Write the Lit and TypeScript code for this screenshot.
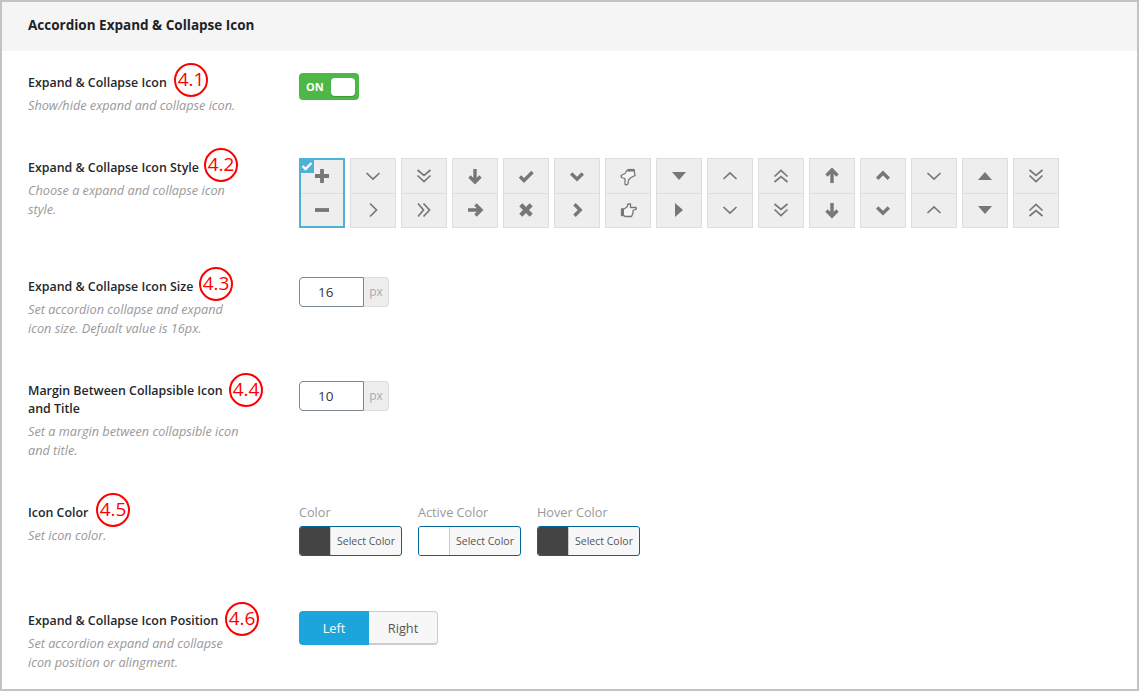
import { LitElement, html, css, svg } from "lit";
import { customElement } from "lit/decorators.js";

const line = (d: string, w: number) => svg`<path d=${d} fill="none" stroke="#777" stroke-width=${w} />`;
const fill = (d: string) => svg`<path d=${d} fill="#777" />`;

const ICONS: Record<string, unknown> = {
  plus: line("M10 3V17M3 10H17", 3.8),
  minus: line("M3 10H17", 3.8),
  chevD: line("M3.500 7 10 13 16.500 7", 1.7),
  chevU: line("M3.500 13 10 7 16.500 13", 1.7),
  chevR: line("M7 3.500 13.500 10 7 16.500", 1.7),
  dblD: line("M3.500 4 10 9.500 16.500 4M3.500 9.500 10 15.500 16.500 9.500", 1.7),
  dblU: line("M3.500 16 10 10.500 16.500 16M3.500 10.500 10 4.500 16.500 10.500", 1.7),
  dblR: line("M4 3.500 9.500 10 4 16.500M9.500 3.500 15.500 10 9.500 16.500", 1.7),
  arrD: line("M10 3V16M4.500 10.500 10 16 15.500 10.500", 3.400),
  arrU: line("M10 17V4M4.500 9.500 10 4 15.500 9.500", 3.400),
  arrR: line("M3 10H16M10.500 4.500 16 10 10.500 15.500", 3.400),
  check: line("M4 10.500 8 14.500 16.500 6", 3.400),
  x: line("M4.800 4.800 15.200 15.200M15.200 4.800 4.800 15.200", 4.400),
  boldD: line("M4.200 7.500 10 13.200 15.800 7.500", 3.400),
  boldU: line("M4.200 12.800 10 7 15.800 12.800", 3.400),
  boldR: line("M7.500 4.200 13.200 10 7.500 15.800", 3.400),
  handD: svg`<path d="M9 4.500 16 4 17 9.500 13 11.500 10.500 14 10 18 8 19 7 18V12.500L3.500 11.500 3 9.500 7 7.500Z" fill="#f5f5f5" stroke="#777" stroke-width="1.300" stroke-linejoin="round"/><path d="M9.500 4.200H16.500" stroke="#777" stroke-width="2.600"/>`,
  handR: svg`<path d="M3.500 9H6L9 7 10 3.800 12.500 4V7.500H18L18.500 9 15 10.500V13L13.500 16.500H7L6 15.500H3.500Z" fill="#f5f5f5" stroke="#777" stroke-width="1.300" stroke-linejoin="round"/><path d="M3 9H6V16H3Z" fill="#777"/>`,
  carD: fill("M3 6H17L10 14Z"),
  carU: fill("M3 14H17L10 6Z"),
  carR: fill("M6 3V17L14 10Z"),
};

const GRID: [string, string][] = [
  ["plus", "minus"], ["chevD", "chevR"], ["dblD", "dblR"], ["arrD", "arrR"], ["check", "x"],
  ["boldD", "boldR"], ["handD", "handR"], ["carD", "carR"], ["chevU", "chevD"], ["dblU", "dblD"],
  ["arrU", "arrD"], ["boldU", "boldD"], ["chevD", "chevU"], ["carU", "carD"], ["dblD", "dblU"],
];

const icon = (n: string) => html`<svg class="ic" viewBox="0 0 20 20" width="20" height="20">${ICONS[n]}</svg>`;

@customElement("app-root")
export class AppRoot extends LitElement {
  static styles = css`
    :host { display: block; font-family: "Open Sans", sans-serif; }
    .frame { box-sizing: border-box; width: 1139px; height: 691px; border: 2px solid #c3c3c3; background: #fff; overflow: hidden; position: relative; }
    .head { height: 49px; box-sizing: border-box; background: #f5f5f5; padding: 0 26px 4px; display: flex; align-items: center; font-size: 13.500px; font-weight: 700; color: #1d2327; }
    .body { padding: 22px 26px 0; }
    .row { display: flex; padding-bottom: 43px; }
    .left { width: 271px; flex: none; }
    .lbl { font-size: 12.400px; line-height: 18px; font-weight: 600; color: #23282d; width: 205px; padding-top: 1px; }
    .desc { font-size: 12.700px; line-height: 19px; font-style: italic; color: #999; margin-top: 4px; width: 216px; }
    .toggle { width: 60px; height: 27px; box-sizing: border-box; border-radius: 4px; background: #4db848; display: flex; align-items: center; justify-content: space-between; padding: 0 4px 0 7px; font-size: 11px; font-weight: 700; color: #fff; }
    .knob { width: 24px; height: 18px; border-radius: 4px; background: #fff; box-shadow: 0 1px 1px rgba(0,0,0,.2); }
    .grid { display: flex; gap: 5px; padding-bottom: 6px; }
    .tile { width: 46px; height: 70px; box-sizing: border-box; border: 1px solid #ddd; background: #eee; display: flex; flex-direction: column; position: relative; }
    .tile.sel { border: 2px solid #4fb0d8; }
    .half { flex: 1; display: flex; align-items: center; justify-content: center; }
    .half + .half { border-top: 1px solid #ddd; }
    .tick { position: absolute; left: -1px; top: -1px; width: 14px; height: 14px; background: #4fb0d8; }
    .tick svg { display: block; }
    .ic { display: block; }
    .num { display: flex; height: 30px; }
    .num .val { width: 65px; box-sizing: border-box; border: 1px solid #7e8993; border-radius: 4px 0 0 4px; padding-left: 18px; font-size: 13.500px; line-height: 28px; color: #32373c; background: #fff; }
    .num .unit { width: 25px; box-sizing: border-box; border: 1px solid #ddd; border-left: 0; border-radius: 0 4px 4px 0; background: #eee; color: #aaa; font-size: 12px; line-height: 28px; text-align: center; }
    .colors { display: flex; gap: 16px; padding-bottom: 12px; }
    .c-lbl { font-size: 12.700px; line-height: 18px; color: #999; margin-bottom: 5px; }
    .cbtn { display: flex; width: 103px; height: 30px; box-sizing: border-box; border: 1px solid #006799; border-radius: 3px; overflow: hidden; background: #f7f7f7; }
    .sw { width: 30px; border-right: 1px solid #ccc; }
    .sw.dark { background: #444; }
    .sw.light { background: #fff; }
    .cbtn span { flex: 1; text-align: center; font-size: 10.500px; line-height: 28px; color: #555; }
    .seg { display: flex; height: 34px; font-size: 12.800px; line-height: 35px; text-align: center; }
    .seg div { box-sizing: border-box; }
    .seg .on { width: 70px; background: #1ba5dc; color: #fff; border-radius: 4px 0 0 4px; font-weight: 500; }
    .seg .off { width: 69px; background: #f7f7f7; color: #555; border: 1px solid #ccc; border-left: 0; border-bottom-width: 2px; border-radius: 0 4px 4px 0; line-height: 33px; }
    .badge { position: absolute; width: 34px; height: 34px; box-sizing: border-box; border: 2.500px solid #f00; border-radius: 50%; color: #f00; font-size: 19px; line-height: 28px; text-align: center; }
  `;

  private row(label: string, desc: string, ctl: unknown) {
    return html`<div class="row">
      <div class="left"><div class="lbl">${label}</div><div class="desc">${desc}</div></div>
      <div>${ctl}</div>
    </div>`;
  }

  private color(label: string, tone: string) {
    return html`<div>
      <div class="c-lbl">${label}</div>
      <div class="cbtn"><div class="sw ${tone}"></div><span>Select Color</span></div>
    </div>`;
  }

  private num(v: string) {
    return html`<div class="num"><div class="val">${v}</div><div class="unit">px</div></div>`;
  }

  render() {
    const badges: [string, number, number][] = [
      ["4.1", 191, 80], ["4.2", 221, 165], ["4.3", 216, 284], ["4.4", 246, 390], ["4.5", 113, 510], ["4.6", 242, 619],
    ];
    return html`<div class="frame">
      <div class="head">Accordion Expand &amp; Collapse Icon</div>
      <div class="body">
        ${this.row("Expand & Collapse Icon", "Show/hide expand and collapse icon.",
          html`<div class="toggle">ON<div class="knob"></div></div>`)}
        ${this.row("Expand & Collapse Icon Style", "Choose a expand and collapse icon style.",
          html`<div class="grid">${GRID.map(([a, b], i) => html`<div class="tile ${i === 0 ? "sel" : ""}">
            <div class="half">${icon(a)}</div><div class="half">${icon(b)}</div>
            ${i === 0 ? html`<div class="tick"><svg viewBox="0 0 14 14" width="14" height="14"><path d="M2.500 7 5.500 10 11.500 4" fill="none" stroke="#fff" stroke-width="2.400"/></svg></div>` : ""}
          </div>`)}</div>`)}
        ${this.row("Expand & Collapse Icon Size", "Set accordion collapse and expand icon size. Defualt value is 16px.", this.num("16"))}
        ${this.row("Margin Between Collapsible Icon and Title", "Set a margin between collapsible icon and title.", this.num("10"))}
        ${this.row("Icon Color", "Set icon color.",
          html`<div class="colors">${this.color("Color", "dark")}${this.color("Active Color", "light")}${this.color("Hover Color", "dark")}</div>`)}
        ${this.row("Expand & Collapse Icon Position", "Set accordion expand and collapse icon position or alingment.",
          html`<div class="seg"><div class="on">Left</div><div class="off">Right</div></div>`)}
      </div>
      ${badges.map(([t, x, y]) => html`<div class="badge" style="left:${x - 19}px;top:${y - 19}px">${t}</div>`)}
    </div>`;
  }
}
